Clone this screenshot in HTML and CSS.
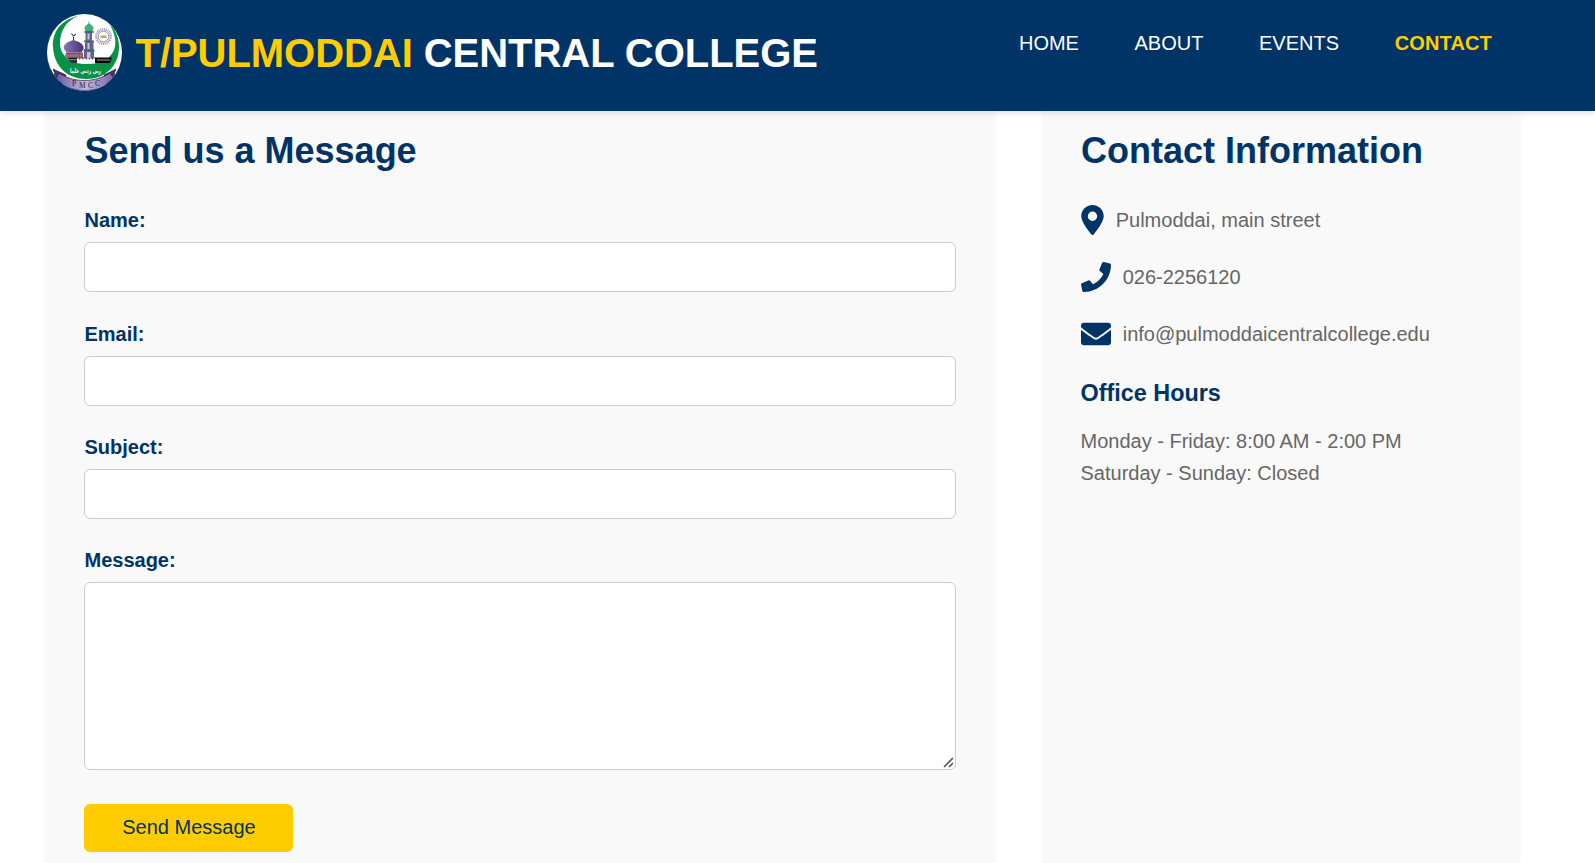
FILE: index.html
```html
<!DOCTYPE html>
<html lang="en">
<head>
<meta charset="utf-8">
<title>Contact - T/Pulmoddai Central College</title>
<link rel="stylesheet" href="styles.css">
</head>
<body>
<header class="header">
  <div class="brand">
    <svg class="logo" viewBox="0 0 75 77" role="img" aria-label="PMCC crest">
      <defs>
        <clipPath id="disc"><ellipse cx="37.5" cy="38.5" rx="37.5" ry="38.5"/></clipPath>
        <linearGradient id="dome" x1="0" x2="1"><stop offset="0" stop-color="#8878b4"/><stop offset="1" stop-color="#4a2f7c"/></linearGradient>
        <linearGradient id="ribbon" x1="0" x2="1"><stop offset="0" stop-color="#6a549a"/><stop offset=".5" stop-color="#c3b8dc"/><stop offset="1" stop-color="#7560a5"/></linearGradient>
      </defs>
      <g clip-path="url(#disc)">
        <rect width="75" height="77" fill="#fff"/>
        <path d="M31 2C13 6 5 19 6 33C7 53 21 65 39 65C58 65 72 52 72 33C72 23 68 15 62 9C68 19 70 29 67 36C62 47 52 50 40 50C25 50 13 43 13 29C13 17 19 7 31 2Z" fill="#089247"/>
        <path d="M46 43.500H65L63 49H46Z" fill="#0b0b0d"/>
        <path d="M50 46H63" stroke="#ddd" stroke-width=".7"/>
        <path d="M20 38.500C14 34 16 29 26.500 26C37 29 39 34 34 38.500Z" fill="url(#dome)"/>
        <path d="M26.500 22.500v4" stroke="#3d2b68" stroke-width="1"/>
        <path d="M24.800 19.500a1.900 1.900 0 1 0 3.800 .3" fill="none" stroke="#111" stroke-width="1"/>
        <path d="M19 38.500h17v5H19z" fill="#6b4f9a"/>
        <path d="M18 41.500h18" stroke="#cc7451" stroke-width="2.500" stroke-dasharray="1.700 .8"/>
        <path d="M20 43.500h26v2H22z" fill="#111"/>
        <path d="M22 46h8v3H24z" fill="#333"/>
        <path d="M30 46.700h18" stroke="#fff" stroke-width="5" stroke-dasharray="2.400 .8"/>
        <path d="M38.500 18h6.500v9h1.500v8H47v9H37v-9h1v-8h.5z" fill="#6c5a9b"/>
        <path d="M40.500 19.500h2v6h-2zM40.500 29h2v6h-2zM40 38h3.500v6H40z" fill="#c9c2df"/>
        <path d="M37.500 17h9v2h-9zM37 26.500h10v1.600H37zM36.500 36h11v1.600h-11z" fill="#2f765c"/>
        <path d="M38.500 17C36 13 39 11 42 9.500C45 11 48 13 45.500 17Z" fill="#43ae73"/>
        <path d="M42 7.500v3" stroke="#43ae73" stroke-width="1"/>
        <circle cx="56.500" cy="22.500" r="7.200" fill="none" stroke="#9c95ae" stroke-width="2.500" stroke-dasharray="1 .8"/>
        <circle cx="56.500" cy="22.500" r="5.300" fill="#fff" stroke="#8b80a9" stroke-width=".9"/>
        <path d="M53.500 21.500h6v2.500h-6z" fill="#adb54d"/>
        <path d="M6 55L19 61L15 70L10 65L3 63L8 60ZM69 55L57 61L60 70L65 65L72 63L67 60Z" fill="#49346f" stroke="#151020" stroke-width=".6"/>
        <path d="M12 59C27 69 47 69 63 59L68 66C51 80 25 80 8 66Z" fill="url(#ribbon)" stroke="#241a39" stroke-width=".7"/>
      </g>
      <text class="logo-motto" x="38.500" y="59" text-anchor="middle" textLength="31" lengthAdjust="spacingAndGlyphs">ربي زدني علما</text>
      <text class="logo-name" x="25" y="72">P</text><text class="logo-name" x="32" y="73.500">M</text><text class="logo-name" x="41" y="73.500">C</text><text class="logo-name" x="48" y="72">C</text>
    </svg>
    <h1 class="title"><span class="title-accent">T/PULMODDAI</span> CENTRAL COLLEGE</h1>
  </div>
  <nav class="nav">
    <a class="nav-link">HOME</a>
    <a class="nav-link">ABOUT</a>
    <a class="nav-link">EVENTS</a>
    <a class="nav-link nav-link-active">CONTACT</a>
  </nav>
</header>
<main class="contact">
  <section class="card">
    <h2 class="card-title">Send us a Message</h2>
    <form class="form">
      <div class="field"><label class="label" for="name">Name:</label><input class="input" id="name" type="text"></div>
      <div class="field"><label class="label" for="email">Email:</label><input class="input" id="email" type="email"></div>
      <div class="field"><label class="label" for="subject">Subject:</label><input class="input" id="subject" type="text"></div>
      <div class="field field-message"><label class="label" for="message">Message:</label><textarea class="input textarea" id="message"></textarea>
        <svg class="grip" viewBox="0 0 11 11"><path d="M1 10L10 1M6 10L10 6" stroke="#555" stroke-width="1.700"/></svg>
      </div>
      <button class="submit" type="button">Send Message</button>
    </form>
  </section>
  <section class="card">
    <h2 class="card-title">Contact Information</h2>
    <ul class="info">
      <li class="info-item"><svg class="icon icon-pin" viewBox="0 0 384 512"><path d="M215.700 499.200C267 435 384 279.400 384 192C384 86 298 0 192 0S0 86 0 192c0 87.400 117 243 168.300 307.200c12.300 15.300 35.100 15.300 47.400 0zM192 112a80 80 0 1 1 0 160 80 80 0 1 1 0-160z"/></svg>Pulmoddai, main street</li>
      <li class="info-item"><svg class="icon" viewBox="0 0 512 512"><path d="M493.400 24.600l-104-24c-11.300-2.600-22.900 3.300-27.500 13.900l-48 112c-4.200 9.800-1.400 21.300 6.900 28l60.600 49.600c-36 76.700-98.900 140.500-177.200 177.200l-49.600-60.600c-6.800-8.300-18.200-11.100-28-6.900l-112 48C3.900 366.500-2 378.100.6 389.400l24 104C27.100 504.200 36.700 512 48 512c256.100 0 464-207.500 464-464 0-11.200-7.700-20.900-18.600-23.400z"/></svg>026-2256120</li>
      <li class="info-item"><svg class="icon" viewBox="0 0 512 512"><path d="M502.300 190.800c3.900-3.100 9.700-.2 9.700 4.700V400c0 26.500-21.500 48-48 48H48c-26.500 0-48-21.500-48-48V195.600c0-5 5.700-7.800 9.700-4.700 22.400 17.400 52.100 39.500 154.100 113.600 21.100 15.400 56.700 47.800 92.200 47.600 35.700.3 72-32.800 92.300-47.600 102-74.100 131.600-96.300 154-113.700zM256 320c23.200.4 56.600-29.200 73.400-41.400 132.700-96.300 142.800-104.700 173.400-128.700 5.800-4.500 9.200-11.500 9.200-18.900v-19c0-26.500-21.500-48-48-48H48c-26.500 0-48 21.500-48 48v19c0 7.400 3.400 14.300 9.200 18.900 30.600 23.900 40.700 32.400 173.400 128.700 16.800 12.200 50.200 41.800 73.400 41.400z"/></svg>info@pulmoddaicentralcollege.edu</li>
    </ul>
    <h3 class="hours-title">Office Hours</h3>
    <p class="hours">Monday - Friday: 8:00 AM - 2:00 PM<br>Saturday - Sunday: Closed</p>
  </section>
</main>
</body>
</html>
```
FILE: styles.css
```css
* { box-sizing: border-box; margin: 0; padding: 0; }

body {
  display: flex;
  flex-direction: column;
  height: 863px;
  overflow: hidden;
  background: #fff;
  color: #666;
  font: 20px/32px "Liberation Sans", Arial, sans-serif;
}

.header {
  position: relative;
  z-index: 1;
  flex: none;
  display: flex;
  justify-content: space-between;
  align-items: flex-start;
  height: 111px;
  padding: 14px 103px 0 47px;
  background: #003366;
  box-shadow: 0 2px 6px rgba(0, 0, 0, .12);
}

.brand { display: flex; align-items: center; gap: 13.500px; }
.logo { display: block; width: 75px; height: 77px; }
.logo-motto { font: bold 6.500px "DejaVu Sans", sans-serif; fill: #fff; }
.logo-name { font: 7.500px "Liberation Serif", serif; fill: #231942; }
.title { color: #fff; font-size: 40px; line-height: 46px; letter-spacing: -.05px; white-space: nowrap; }
.title-accent { color: #ffcc00; }

.nav { display: flex; gap: 55.600px; padding-top: 13px; }
.nav-link { color: #fff; }
.nav-link-active { color: #ffcc00; font-weight: bold; letter-spacing: .15px; }

.contact {
  flex: 1;
  display: grid;
  grid-template-columns: 946px 474px;
  gap: 50.500px;
  padding-left: 47px;
}

.card {
  padding: 10px 37px 0;
  background: #f9f9f9;
  box-shadow: 0 0 6px rgba(0, 0, 0, .07);
}

.card-title { padding-left: .5px; color: #003366; font-size: 36px; line-height: 60px; margin-bottom: 23.300px; }

.field { display: flex; flex-direction: column; margin-bottom: 25.300px; }
.label { padding-left: .5px; color: #003366; font-weight: bold; margin-bottom: 6px; }
.input {
  width: 100%;
  height: 50px;
  border: 1px solid #ccc;
  border-radius: 6px;
  background: #fff;
  font: inherit;
}
.field-message { position: relative; margin-bottom: 34px; }
.textarea { height: 188px; resize: none; }
.grip { position: absolute; right: 2px; bottom: 2px; width: 11px; height: 11px; }

.submit {
  display: block;
  width: 209px;
  height: 48px;
  padding: 0 0 2px 1px;
  border: 0;
  border-radius: 6px;
  background: #ffcc00;
  color: #003366;
  font: inherit;
}

.info { list-style: none; display: grid; gap: 25px; }
.info-item { display: flex; align-items: center; gap: 12.200px; height: 32px; }
.icon { width: 30px; height: 30px; fill: #003366; }
.icon-pin { width: 23px; }

.hours-title { color: #003366; font-size: 23.400px; line-height: 36px; margin: 25px 0 14px; }
```
